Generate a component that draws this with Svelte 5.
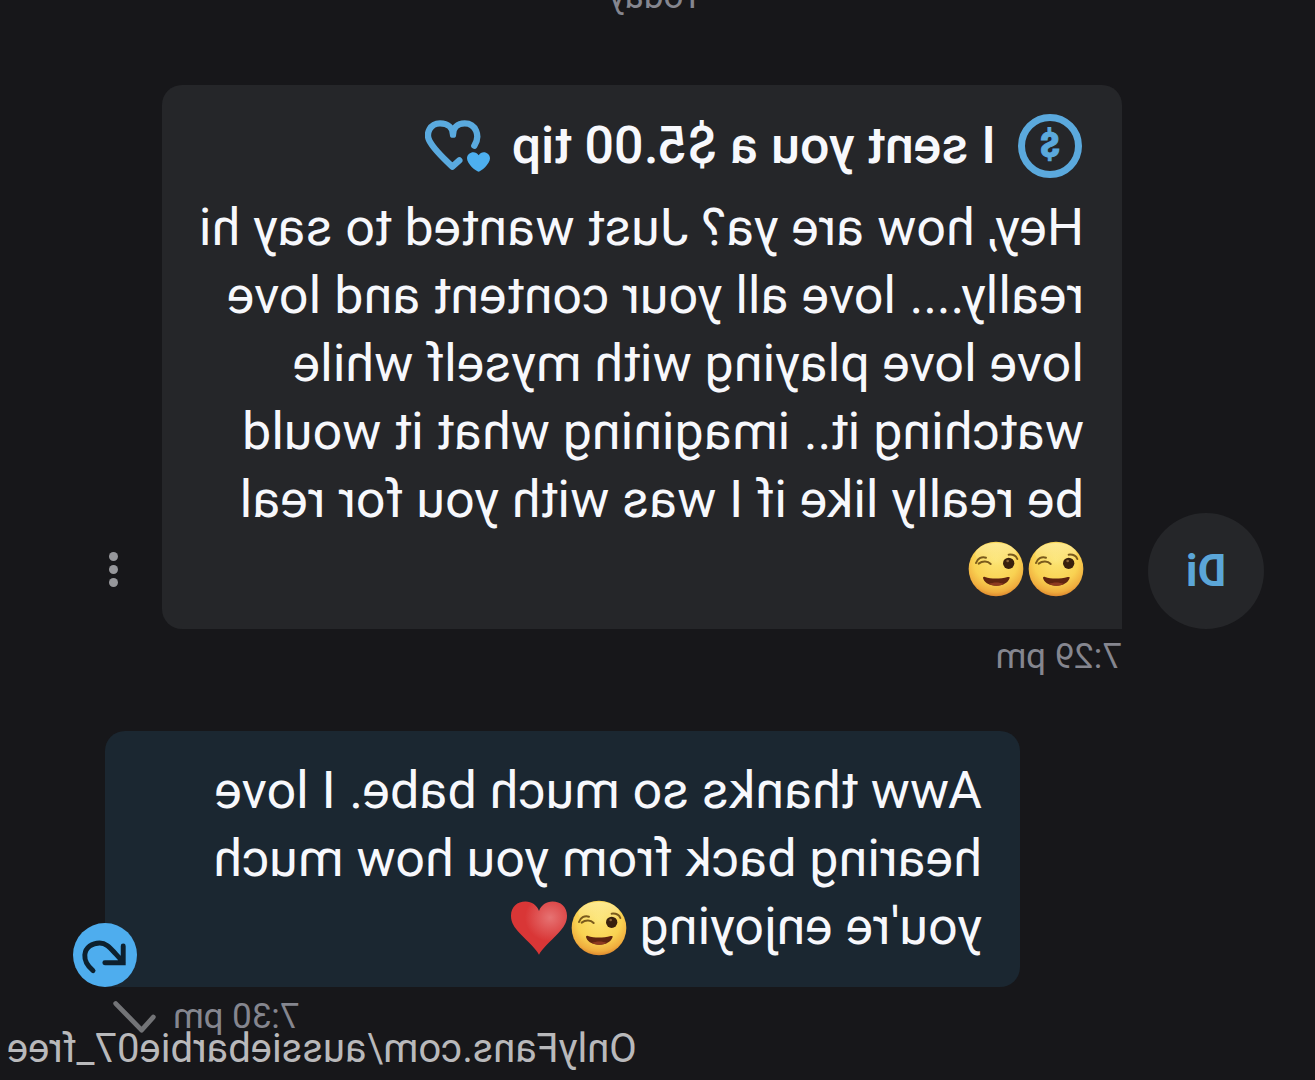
<script lang="ts">
  const incoming =
    'Hey, how are ya? Just wanted to say hi really.... love all your content and love love love playing with myself while watching it.. imagining what it would be really like if I was with you for real';
  const outgoing =
    "Aww thanks so much babe. I love hearing back from you how much you're enjoying";
</script>

{#snippet wink()}
  <svg class="emoji" viewBox="0 0 168 168" role="img" aria-label="winking face">
    <defs>
      <radialGradient id="face" cx="0.5" cy="0.34" r="0.68">
        <stop offset="0" stop-color="#fce473" />
        <stop offset="0.6" stop-color="#f9d252" />
        <stop offset="0.86" stop-color="#f0ad3e" />
        <stop offset="1" stop-color="#d97f2a" />
      </radialGradient>
      <linearGradient id="shine" x2="0" y2="1">
        <stop offset="0" stop-color="#fff6b8" stop-opacity="0.6" />
        <stop offset="1" stop-color="#fff6b8" stop-opacity="0" />
      </linearGradient>
    </defs>
    <circle cx="84" cy="84" r="82" fill="url(#face)" />
    <ellipse cx="84" cy="40" rx="62" ry="34" fill="url(#shine)" />
    <g fill="none" stroke="#7a5a1c" stroke-width="6" stroke-linecap="round">
      <path d="M20 54 C24 44 34 40 46 41" />
      <path d="M100 69 C109 60 124 59 136 68" />
      <path d="M114 50 C128 46 140 53 144 66" />
    </g>
    <circle cx="46" cy="67" r="17" fill="#38200d" />
    <circle cx="49" cy="60" r="4" fill="#8a6238" />
    <path d="M43 111 C42 108 45 107 49 108 C72 114 98 114 117 108 C122 106 124 109 122 114 C116 128 100 134 83 134 C66 134 48 127 43 111 Z" fill="#5f2410" />
    <path d="M60 129 C74 123 92 123 106 129 C92 136 74 136 60 129 Z" fill="#8d3a20" />
  </svg>
{/snippet}

<main class="chat">
  <p class="day">Today</p>

  <article class="message received">
    <a class="avatar" href="#profile">Di</a>
    <div class="column">
      <div class="bubble">
        <h2 class="tip">
          <span class="coin">$</span>
          <span>I sent you a $5.00 tip</span>
          <svg class="hearts" viewBox="0 0 195 156" aria-hidden="true">
            <path d="M47 77 C28 48 42 10 76 10 C98 10 111 24 111 44 C111 24 126 10 150 10 C180 10 193 40 182 62 C171 84 140 115 113 140 L92 121" fill="none" stroke="#5aaadf" stroke-width="19" stroke-linecap="round" stroke-linejoin="round" />
            <path d="M34 155 C28 155 0 133 0 115 C0 97 25 89 34 106 C44 89 69 97 69 115 C69 133 41 155 34 155 Z" fill="#4dafef" />
          </svg>
        </h2>
        <p class="text">{incoming} <span class="emojis">{@render wink()}{@render wink()}</span></p>
      </div>
      <time class="time">7:29 pm</time>
    </div>
    <button class="more" aria-label="More"><i></i><i></i><i></i></button>
  </article>

  <article class="message sent">
    <div class="bubble">
      <p class="text">
        {outgoing} <span class="emojis">{@render wink()}<svg class="emoji" viewBox="0 0 174 168" role="img" aria-label="red heart">
            <defs>
              <radialGradient id="red" cx="0.3" cy="0.3" r="0.45">
                <stop offset="0" stop-color="#e67373" />
                <stop offset="1" stop-color="#d93636" />
              </radialGradient>
            </defs>
            <path d="M87 167 C79 149 52 127 28 101 C10 82 0 67 0 46 C0 18 20 2 45 2 C65 2 80 14 87 31 C94 14 109 2 129 2 C154 2 174 18 174 46 C174 67 164 82 146 101 C122 127 95 149 87 167 Z" fill="url(#red)" />
          </svg></span>
      </p>
      <button class="reply" aria-label="Reply">
        <svg viewBox="0 0 195 195" aria-hidden="true">
          <path d="M134 145 C152 130 160 112 159 97 C157 74 136 61 114 61 C92 61 80 78 65 94 L42 119 M42 70 V121 H98" fill="none" stroke="#0d202e" stroke-width="15" stroke-linecap="round" />
        </svg>
      </button>
    </div>
    <div class="status">
      <time class="time">7:30 pm</time>
      <svg class="tick" viewBox="0 0 132 99" role="img" aria-label="Sent">
        <path d="M8 50 L44 90 L124 8" fill="none" stroke="#737477" stroke-width="15" stroke-linecap="round" stroke-linejoin="round" />
      </svg>
    </div>
  </article>

  <footer class="watermark">OnlyFans.com/aussiebarbie07_free</footer>
</main>

<style>
  :global(body) {
    background: #17171a;
    overflow: hidden;
  }

  .chat {
    position: relative;
    box-sizing: border-box;
    min-height: 100vh;
    overflow: hidden;
    background: #17171a;
    color: #f7f8fc;
    font-family: Roboto, "Liberation Sans", sans-serif;
    transform: scaleX(-1);
  }

  p,
  h2 {
    margin: 0;
  }

  button {
    border: 0;
    padding: 0;
    cursor: pointer;
  }

  .day {
    margin: -27px 0 64px 4px;
    color: #85868f;
    font-size: 35px;
    line-height: 48px;
    text-align: center;
  }

  .message {
    display: flex;
  }

  .received {
    align-items: flex-end;
    gap: 26px;
    padding: 0 92px 0 51px;
  }

  .avatar {
    display: flex;
    flex: none;
    align-items: center;
    justify-content: center;
    width: 116px;
    height: 116px;
    margin-bottom: 56px;
    border-radius: 50%;
    background: #252629;
    color: #5ba6d8;
    font-size: 44px;
    font-weight: 700;
    text-decoration: none;
  }

  .column {
    flex: 1;
  }

  .bubble {
    position: relative;
    padding: 27px 30px 27px 38px;
    border-radius: 20px;
    background: #252629;
  }

  .received .bubble {
    border-bottom-left-radius: 0;
  }

  .tip {
    display: flex;
    align-items: center;
    gap: 22px;
    margin-bottom: 14px;
    padding-left: 2px;
    font-size: 52px;
    font-weight: 500;
    line-height: 68px;
  }

  .coin {
    box-sizing: border-box;
    display: flex;
    align-items: center;
    justify-content: center;
    width: 64px;
    height: 64px;
    border: 7px solid #5ba9dd;
    border-radius: 50%;
    color: #5ba9dd;
    font-size: 35px;
    font-weight: 900;
    line-height: 48px;
    -webkit-text-stroke: 1px #5ba9dd;
  }

  .hearts {
    width: 65px;
    height: 52px;
  }

  .text {
    font-size: 52px;
    line-height: 68px;
  }

  .emojis {
    display: inline-flex;
    gap: 4px;
    height: 56px;
    vertical-align: -12px;
  }

  .emoji {
    width: 56px;
    height: 56px;
  }

  .time {
    display: block;
    color: #85868f;
    font-size: 35px;
    line-height: 56px;
  }

  .more {
    display: flex;
    flex: none;
    flex-direction: column;
    align-items: center;
    gap: 4px;
    width: 44px;
    margin-bottom: 98px;
    background: none;
  }

  .more i {
    width: 9px;
    height: 9px;
    border-radius: 50%;
    background: #96979b;
  }

  .sent {
    flex-direction: column;
    margin: 46px 105px 0 295px;
  }

  .sent .bubble {
    padding: 26px 38px;
    border-bottom-right-radius: 0;
    background: #1b2731;
  }

  .reply {
    position: absolute;
    right: -32px;
    bottom: 0;
    width: 64px;
    height: 64px;
    border-radius: 50%;
    background: #4eadee;
  }

  .reply svg {
    display: block;
    width: 64px;
    height: 64px;
  }

  .status {
    display: flex;
    align-items: center;
    justify-content: flex-end;
    gap: 17px;
    padding: 2px 8px 0 0;
  }

  .tick {
    width: 43px;
    height: 32px;
  }

  .watermark {
    position: absolute;
    right: 7px;
    bottom: 7px;
    color: #b9b9bb;
    font-size: 40px;
    line-height: 48px;
  }
</style>
